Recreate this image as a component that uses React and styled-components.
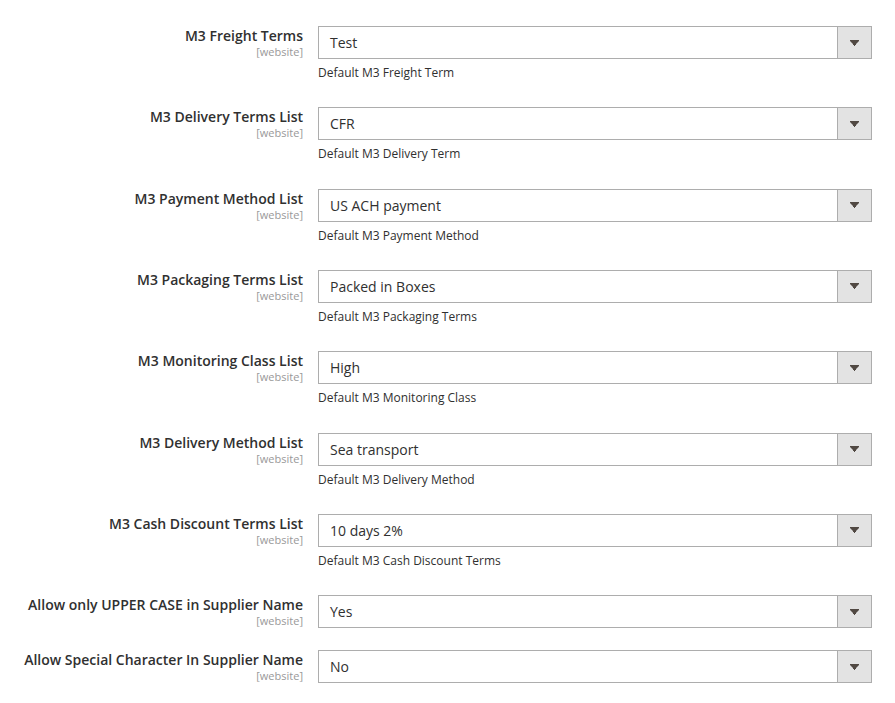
import React from "react";
import styled, { createGlobalStyle } from "styled-components";

const GlobalStyle = createGlobalStyle`
  body {
    margin: 0;
    background: #ffffff;
    font-family: "Open Sans", "Liberation Sans", sans-serif;
    color: #303030;
  }
`;

const Form = styled.div`
  width: 872px;
  padding-top: 26px;
`;

const Row = styled.div`
  display: grid;
  grid-template-columns: 303px 1fr;
  column-gap: 15px;
  margin-bottom: ${(p) => (p.$hasNote ? "26.33px" : "22px")};
`;

const Label = styled.div`
  text-align: right;
  padding-top: 1px;

  strong {
    display: block;
    font-size: 14px;
    font-weight: 600;
    line-height: 18px;
    color: #303030;
  }

  span {
    display: block;
    font-size: 11px;
    line-height: 13px;
    color: #999999;
  }
`;

const Control = styled.div`
  display: flex;
  flex-direction: column;
`;

const SelectBox = styled.div`
  display: flex;
  height: 33px;
  box-sizing: border-box;
  border: 1px solid #adadad;
  background: #ffffff;
`;

const Value = styled.div`
  flex: 1;
  padding: 0 11px;
  font-size: 14px;
  line-height: 31px;
  color: #303030;
`;

const ArrowButton = styled.div`
  width: 33px;
  display: flex;
  align-items: center;
  justify-content: center;
  background: #e3e3e3;
  border-left: 1px solid #adadad;
`;

const Note = styled.div`
  margin-top: 5px;
  font-size: 12px;
  line-height: 17px;
  color: #303030;
`;

const fields = [
  { label: "M3 Freight Terms", value: "Test", note: "Default M3 Freight Term" },
  { label: "M3 Delivery Terms List", value: "CFR", note: "Default M3 Delivery Term" },
  { label: "M3 Payment Method List", value: "US ACH payment", note: "Default M3 Payment Method" },
  { label: "M3 Packaging Terms List", value: "Packed in Boxes", note: "Default M3 Packaging Terms" },
  { label: "M3 Monitoring Class List", value: "High", note: "Default M3 Monitoring Class" },
  { label: "M3 Delivery Method List", value: "Sea transport", note: "Default M3 Delivery Method" },
  { label: "M3 Cash Discount Terms List", value: "10 days 2%", note: "Default M3 Cash Discount Terms" },
  { label: "Allow only UPPER CASE in Supplier Name", value: "Yes" },
  { label: "Allow Special Character In Supplier Name", value: "No" },
];

function Arrow() {
  return (
    <svg width="9" height="6" viewBox="0 0 9 6">
      <path d="M0 0 H9 V1 L6 4 V5 H5 V6 H4 V5 H3 V4 L0 1 Z" fill="#514943" />
    </svg>
  );
}

export default function App() {
  return (
    <>
      <GlobalStyle />
      <Form>
        {fields.map((f) => (
          <Row key={f.label} $hasNote={!!f.note}>
            <Label>
              <strong>{f.label}</strong>
              <span>[website]</span>
            </Label>
            <Control>
              <SelectBox>
                <Value>{f.value}</Value>
                <ArrowButton>
                  <Arrow />
                </ArrowButton>
              </SelectBox>
              {f.note && <Note>{f.note}</Note>}
            </Control>
          </Row>
        ))}
      </Form>
    </>
  );
}
